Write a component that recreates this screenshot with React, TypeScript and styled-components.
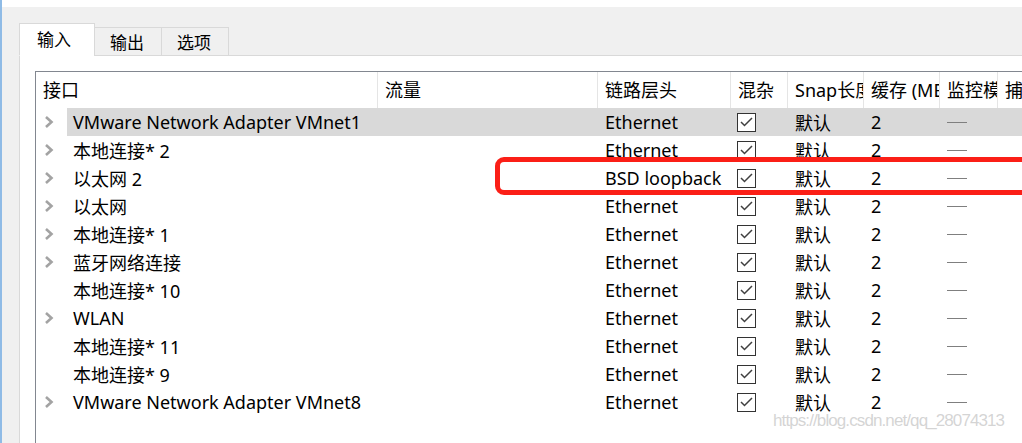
import React from "react";
import styled, { createGlobalStyle } from "styled-components";

const GlobalStyle = createGlobalStyle`
  html, body { margin: 0; padding: 0; background: #ffffff; overflow: hidden; }
  body { font-family: "Noto Sans", "Noto Sans CJK SC", sans-serif; }
`;

const Window = styled.div`
  position: relative;
  width: 1022px;
  height: 443px;
  overflow: hidden;
  border-left: 2px solid #8fbbe6;
  box-sizing: border-box;
  background: #ffffff;
  padding-top: 7px;
`;

const Body = styled.div`
  background: #f0f0f0;
  height: 100%;
  padding: 16px 0 0 17px;
  box-sizing: border-box;
`;

const TabStrip = styled.div`
  display: flex;
  align-items: flex-end;
  height: 33px;
  margin-bottom: -1px;
  position: relative;
  z-index: 1;
`;

const Tab = styled.div<{ $active?: boolean }>`
  box-sizing: border-box;
  height: ${(p) => (p.$active ? 33 : 29)}px;
  width: ${(p) => (p.$active ? 76 : 68)}px;
  padding-left: ${(p) => (p.$active ? 17 : 15)}px;
  margin-left: ${(p) => (p.$active ? 0 : -1)}px;
  background: ${(p) => (p.$active ? "#ffffff" : "#f0f0f0")};
  border: 1px solid #d9d9d9;
  border-bottom: ${(p) => (p.$active ? "1px solid #ffffff" : "1px solid #d9d9d9")};
  font-size: 17px;
  color: #000;
  display: flex;
  align-items: center;
  padding-bottom: ${(p) => (p.$active ? 2 : 0)}px;
  &:first-child { margin-left: 0; }
`;

const Panel = styled.div`
  background: #ffffff;
  border: 1px solid #d9d9d9;
  border-right: none;
  height: 420px;
  padding: 15px 0 0 15px;
  box-sizing: border-box;
`;

const Table = styled.div`
  width: 1100px;
  border: 1px solid #828790;
  height: 420px;
  box-sizing: border-box;
  font-size: 18px;
  color: #000;
`;

const cols = "31px 311px 220px 133px 57px 76px 76px 58px 160px";

const HeaderRow = styled.div`
  display: grid;
  grid-template-columns: ${cols};
  height: 36px;
`;

const HeaderCell = styled.div<{ $span?: number }>`
  grid-column: span ${(p) => p.$span ?? 1};
  display: flex;
  align-items: center;
  padding: 0 6px 2px 7px;
  border-right: 1px solid #e5e5e5;
  white-space: nowrap;
  overflow: hidden;
  text-overflow: clip;
  box-sizing: border-box;
`;

const Row = styled.div`
  display: grid;
  grid-template-columns: ${cols};
  height: 28px;
`;

const Expander = styled.div`
  display: flex;
  align-items: center;
  padding-left: 7px;
`;

const Cell = styled.div<{ $sel?: boolean; $pad?: number }>`
  display: flex;
  align-items: center;
  padding-left: ${(p) => p.$pad ?? 7}px;
  background: ${(p) => (p.$sel ? "#d9d9d9" : "transparent")};
  white-space: nowrap;
  overflow: hidden;
  box-sizing: border-box;
`;

const NameCell = styled(Cell)`
  padding-left: 6px;
  overflow: visible;
  position: relative;
  z-index: 1;
`;

const CheckBox = styled.div`
  width: 19px;
  height: 19px;
  box-sizing: border-box;
  border: 1px solid #333333;
  background: #ffffff;
  display: flex;
  align-items: center;
  justify-content: center;
`;

const Dash = styled.div`
  width: 20px;
  height: 1px;
  background: #7f7f7f;
`;

const Highlight = styled.div`
  position: absolute;
  left: 493px;
  top: 157px;
  width: 560px;
  height: 38px;
  box-sizing: border-box;
  border: 5px solid #fb1f17;
  border-radius: 9px;
  pointer-events: none;
  z-index: 3;
`;

const Watermark = styled.div`
  position: absolute;
  left: 771px;
  top: 411px;
  font-family: "Liberation Sans", Arial, sans-serif;
  font-size: 17px;
  letter-spacing: -0.9px;
  color: rgba(205, 205, 205, 0.85);
  white-space: nowrap;
  z-index: 4;
`;

const Chevron = () => (
  <svg width="12" height="14" viewBox="0 0 12 14">
    <polyline points="3,2 8.5,7 3,12" fill="none" stroke="#a3a3a3" strokeWidth="2.6" />
  </svg>
);

const Check = () => (
  <svg width="13" height="10" viewBox="0 0 13 10">
    <polyline points="1,5 4.5,8.5 12,1" fill="none" stroke="#404040" strokeWidth="1.5" />
  </svg>
);

type Item = { name: string; link: string; expand: boolean };

const items: Item[] = [
  { name: "VMware Network Adapter VMnet1", link: "Ethernet", expand: true },
  { name: "本地连接* 2", link: "Ethernet", expand: true },
  { name: "以太网 2", link: "BSD loopback", expand: true },
  { name: "以太网", link: "Ethernet", expand: true },
  { name: "本地连接* 1", link: "Ethernet", expand: true },
  { name: "蓝牙网络连接", link: "Ethernet", expand: true },
  { name: "本地连接* 10", link: "Ethernet", expand: false },
  { name: "WLAN", link: "Ethernet", expand: true },
  { name: "本地连接* 11", link: "Ethernet", expand: false },
  { name: "本地连接* 9", link: "Ethernet", expand: false },
  { name: "VMware Network Adapter VMnet8", link: "Ethernet", expand: true },
];

export default function App() {
  return (
    <>
      <GlobalStyle />
      <Window>
        <Body>
          <TabStrip>
            <Tab $active>输入</Tab>
            <Tab>输出</Tab>
            <Tab>选项</Tab>
          </TabStrip>
          <Panel>
            <Table>
              <HeaderRow>
                <HeaderCell $span={2}>接口</HeaderCell>
                <HeaderCell>流量</HeaderCell>
                <HeaderCell>链路层头</HeaderCell>
                <HeaderCell>混杂</HeaderCell>
                <HeaderCell>Snap长度</HeaderCell>
                <HeaderCell>缓存 (MB)</HeaderCell>
                <HeaderCell>监控模式</HeaderCell>
                <HeaderCell>捕获过滤器</HeaderCell>
              </HeaderRow>
              {items.map((it, i) => {
                const sel = i === 0;
                return (
                  <Row key={i}>
                    <Expander>{it.expand && <Chevron />}</Expander>
                    <NameCell $sel={sel}>{it.name}</NameCell>
                    <Cell $sel={sel} />
                    <Cell $sel={sel}>{it.link}</Cell>
                    <Cell $sel={sel} $pad={6}>
                      <CheckBox>
                        <Check />
                      </CheckBox>
                    </Cell>
                    <Cell $sel={sel}>默认</Cell>
                    <Cell $sel={sel}>2</Cell>
                    <Cell $sel={sel}>
                      <Dash />
                    </Cell>
                    <Cell $sel={sel} />
                  </Row>
                );
              })}
            </Table>
          </Panel>
        </Body>
        <Highlight />
        <Watermark>https://blog.csdn.net/qq_28074313</Watermark>
      </Window>
    </>
  );
}
